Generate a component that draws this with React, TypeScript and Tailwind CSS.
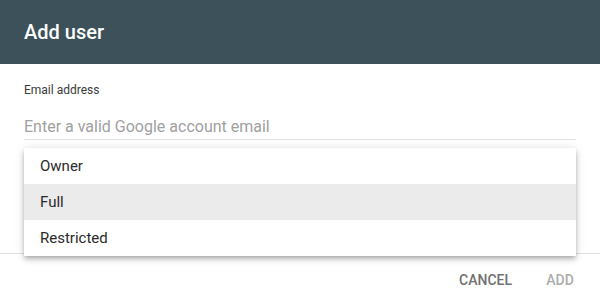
import React from "react";

export default function App() {
  const items = ["Owner", "Full", "Restricted"];
  return (
    <div
      className="relative w-[600px] h-[305px] bg-white overflow-hidden"
      style={{ fontFamily: "Roboto, 'Liberation Sans', sans-serif" }}
    >
      <div className="h-16 bg-[#3c5159] flex items-center px-6">
        <h1 className="text-[20px] font-medium text-white leading-7">Add user</h1>
      </div>
      <div className="h-[189px] px-6 pt-[18px]">
        <label className="block text-[12px] leading-4 text-[#3a3a3a]">Email address</label>
        <div className="mt-[15px] border-b border-[#e0e0e0]">
          <input
            className="w-full h-[26px] py-px text-[16px] leading-6 text-[#212121] placeholder:text-[#a0a0a0] outline-none bg-transparent"
            placeholder="Enter a valid Google account email"
          />
        </div>
      </div>
      <div className="border-t border-[#e0e0e0] p-2 flex justify-end gap-2">
        <button className="h-9 min-w-16 px-2 text-[14px] font-medium text-[#707070] leading-9">CANCEL</button>
        <button className="h-9 min-w-16 px-2 text-[14px] font-medium text-[#acacac] leading-9">ADD</button>
      </div>
      <div className="absolute left-6 top-[148px] w-[552px] bg-white shadow-[0_2px_4px_-1px_rgba(0,0,0,0.2),0_4px_5px_0_rgba(0,0,0,0.14),0_1px_10px_0_rgba(0,0,0,0.12)]">
        {items.map((it) => (
          <div
            key={it}
            className={
              "h-9 px-4 text-[15px] leading-9 text-[#2a2a2a] " +
              (it === "Full" ? "bg-[#ebebeb]" : "bg-white")
            }
          >
            {it}
          </div>
        ))}
      </div>
    </div>
  );
}
